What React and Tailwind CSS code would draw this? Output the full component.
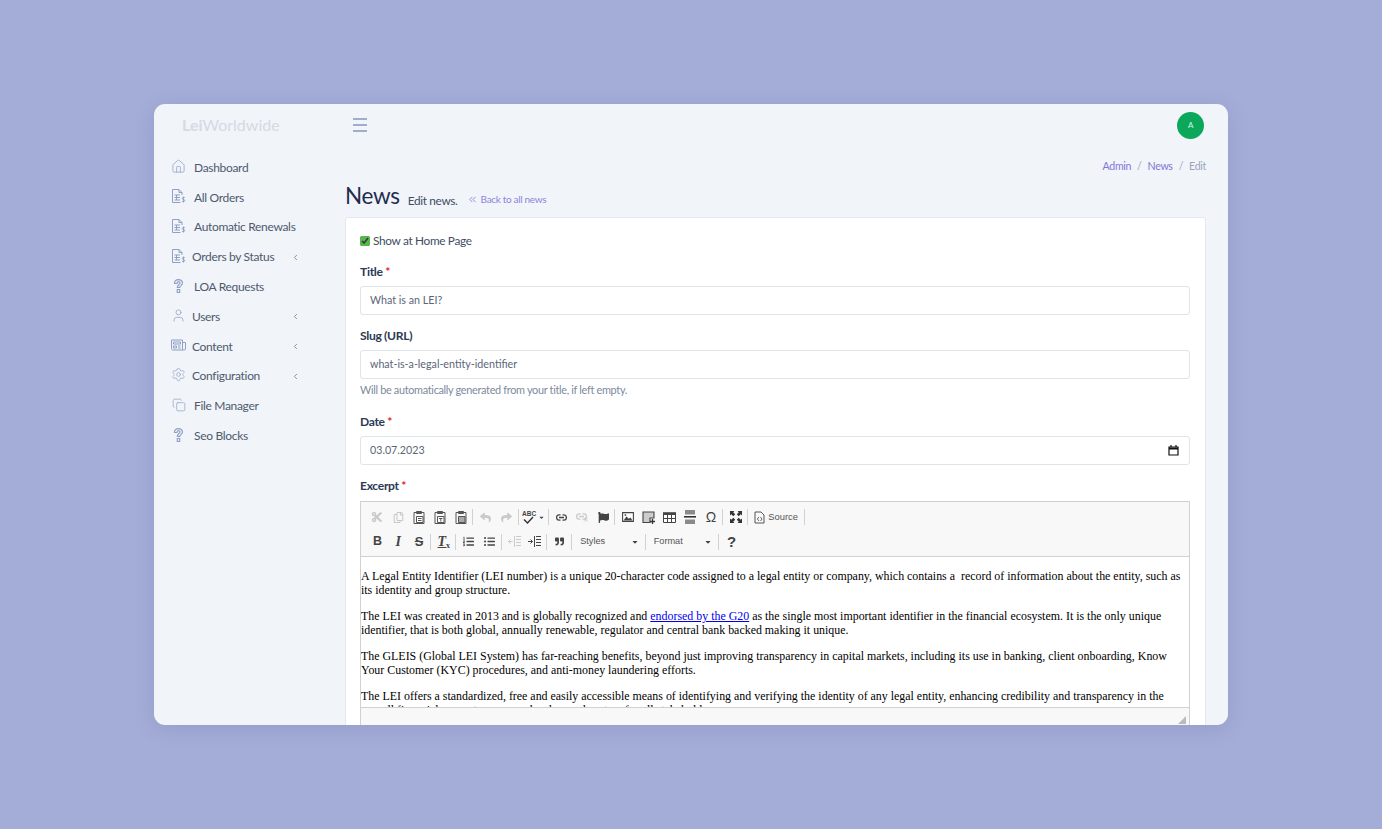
import { ChevronLeft, ChevronsLeft, Copy, Home, Settings, User } from "lucide-react";
import { FaCut, FaFlag, FaListOl, FaListUl, FaQuoteRight, FaReply, FaRegCopy, FaShare, FaCaretDown } from "react-icons/fa";

const font = "font-['Lato','Noto_Sans',sans-serif] tracking-[-0.02em]";

function OrderIcon() {
  return (
    <svg width="15" height="16" viewBox="0 0 15 16" fill="none" stroke="currentColor" strokeWidth="1">
      <path d="M9.5 14.5H1.5V1.5H8L11 4.5V7" />
      <path d="M8 1.5V4.5H11" />
      <path d="M3.5 7H9M3.5 9.5H9M3.5 12H9M5.5 7V12" />
      <path d="M13.8 9.5H12C11 9.5 11 11.5 12.2 11.5H12.8C14 11.5 14 13.5 12.8 13.5H11M12.5 8.5V14.5" strokeWidth="0.9" />
    </svg>
  );
}

function HelpIcon() {
  return (
    <svg width="15" height="16" viewBox="0 0 15 16" fill="none" stroke="currentColor" strokeWidth="1.2">
      <path d="M3.5 5.5C3.5 0.5 11.5 0.5 11.5 5C11.5 7.5 8.7 7.6 8.7 9.5H6.3C6.3 6.5 9 6.5 9 5C9 3.2 6 3.2 6 5.5Z" />
      <path d="M6.3 11.5H8.7V14.5H6.3Z" />
    </svg>
  );
}

function ContentIcon() {
  return (
    <svg width="15" height="16" viewBox="0 0 15 16" fill="none" stroke="currentColor" strokeWidth="1">
      <path d="M0.5 3H11.5V13H2C1 13 0.5 12.5 0.5 11.5Z" />
      <path d="M11.5 5.5H14.5V12C14.5 12.7 14 13 13 13H11.5" />
      <path d="M2.5 5H9.5V7H2.5ZM2.5 9H5.5V11H2.5ZM7 9H9.5M7 11H9.5" />
    </svg>
  );
}

const navItems = [
  { label: "Dashboard", icon: <Home size={15} strokeWidth={1.2} /> },
  { label: "All Orders", icon: <OrderIcon /> },
  { label: "Automatic Renewals", icon: <OrderIcon /> },
  { label: "Orders by Status", icon: <OrderIcon />, sub: true },
  { label: "LOA Requests", icon: <HelpIcon /> },
  { label: "Users", icon: <User size={15} strokeWidth={1.2} />, sub: true },
  { label: "Content", icon: <ContentIcon />, sub: true },
  { label: "Configuration", icon: <Settings size={15} strokeWidth={1.1} />, sub: true },
  { label: "File Manager", icon: <Copy size={14} strokeWidth={1.2} /> },
  { label: "Seo Blocks", icon: <HelpIcon /> },
];

function NavItem({ label, icon, sub }) {
  return (
    <a className="flex h-[29.8px] items-center pr-[45px] pl-[17px] text-[12px] text-[#4e5a6e]">
      <span className="-mt-[3px] flex w-[15px] shrink-0 justify-center text-[#8fa0c4]">{icon}</span>
      <span className={sub ? "ml-[6px] flex-1" : "ml-[8px] flex-1"}>{label}</span>
      {sub && <ChevronLeft size={9} strokeWidth={2.5} className="text-[#7f8ca8]" />}
    </a>
  );
}

function Field({ label, required, children, hint }) {
  return (
    <div className="mb-[10px]">
      <label className="mb-[4px] block pt-[1px] text-[12.1px] leading-[20px] font-bold text-[#2b3a55]">
        {label} {required && <span className="text-[#e02020]">*</span>}
      </label>
      {children}
      {hint && <p className="mt-[2px] mb-[12px] text-[10.9px] leading-[18px] text-[#7d8a9e]">{hint}</p>}
    </div>
  );
}

function TextBox({ value, children }) {
  return (
    <div className="flex h-[29px] items-center justify-between rounded-[3px] border border-[#dfe3ea] bg-white pr-[10px] pl-[9px] text-[10.7px] tracking-normal text-[#5a6577]">
      <span>{value}</span>
      {children}
    </div>
  );
}

function Btn({ children, off }) {
  return <span className={`flex h-[24px] w-[20.8px] shrink-0 items-center justify-center text-[#444] ${off ? "opacity-25" : ""}`}>{children}</span>;
}

function Sep() {
  return <span className="mr-[2px] ml-[1px] h-[16px] w-px shrink-0 bg-[#d1d1d1]" />;
}

function PasteIcon({ mark }) {
  return (
    <svg width="12" height="13" viewBox="0 0 12 13" fill="none" stroke="#555" strokeWidth="1">
      <path d="M3 1.5H1V12.5H11V1.5H9" />
      <path d="M3.5 0.5H8.5V2.5H3.5Z" fill="#555" />
      <path d="M3.5 5.5H10V11.5H3.5Z" fill={mark === "word" ? "#aaa" : "#fff"} />
      {mark === "text" && <path d="M5 7.5H8.5M6.8 7.5V10.5" />}
      {mark === "plain" && <path d="M5 7.5H8.5M5 9.5H8.5" />}
    </svg>
  );
}

function SpellIcon() {
  return (
    <svg width="15" height="14" viewBox="0 0 15 14" fill="none">
      <text x="0" y="6" fontSize="6.5" fontWeight="700" fill="#444" fontFamily="Liberation Sans">ABC</text>
      <path d="M2 9.5L5.5 13L11 7" stroke="#333" strokeWidth="1.4" />
    </svg>
  );
}

function LinkIcon() {
  return (
    <svg width="11" height="7" viewBox="0 0 11 7" fill="none" stroke="#444" strokeWidth="1.3">
      <path d="M4.5 0.8H3C-0.2 0.8 -0.2 6.2 3 6.2H4.5M6.5 0.8H8C11.2 0.8 11.2 6.2 8 6.2H6.5M3 3.5H8" />
    </svg>
  );
}

function UnlinkIcon() {
  return (
    <svg width="12" height="10" viewBox="0 0 12 10" fill="none" stroke="#444" strokeWidth="1.3">
      <path d="M4.5 1.8H3C-0.2 1.8 -0.2 7.2 3 7.2H4.5M6.5 1.8H8C11.2 1.8 11.2 7.2 8 7.2H6.5M3 4.5H8" />
      <path d="M8 6L11.5 9.5M11.5 6L8 9.5" strokeWidth="1" />
    </svg>
  );
}

function AddImageIcon() {
  return (
    <svg width="13" height="13" viewBox="0 0 13 13" fill="none">
      <path d="M1 1H12V7H8V11.5H1Z" fill="#ccc" stroke="#444" strokeWidth="1.1" />
      <path d="M10.5 8V13M8 10.5H13" stroke="#333" strokeWidth="1.3" />
    </svg>
  );
}

function ImageIcon() {
  return (
    <svg width="12" height="10" viewBox="0 0 12 10" fill="none">
      <path d="M0.6 0.6H11.4V9.4H0.6Z" fill="#fff" stroke="#444" strokeWidth="1.1" />
      <path d="M1.5 8.5L4.5 4.5L6.8 6.8L8.5 5.5L10.5 8.5Z" fill="#444" />
      <circle cx="3.4" cy="3" r="0.9" fill="#555" />
    </svg>
  );
}

function TableIcon() {
  return (
    <svg width="13" height="11" viewBox="0 0 13 11" fill="none" stroke="#444" strokeWidth="1">
      <path d="M0.5 2.5H12.5V10.5H0.5Z" fill="#fff" />
      <path d="M0 0.2H13V3H0Z" fill="#444" stroke="none" />
      <path d="M0.5 6.5H12.5M4.5 3V10.5M8.5 3V10.5" />
    </svg>
  );
}

function RuleIcon() {
  return (
    <svg width="12" height="14" viewBox="0 0 12 14">
      <path d="M1 0H11V4.5H1Z" fill="#8a8a8a" />
      <path d="M0 6H12V7.6H0Z" fill="#333" />
      <path d="M1 9.5H11V14H1Z" fill="#8a8a8a" />
    </svg>
  );
}

function FitIcon() {
  return (
    <svg width="12" height="12" viewBox="0 0 12 12" fill="#333">
      <path d="M0 0H4.5L3.2 1.3L5.2 3.3L3.3 5.2L1.3 3.2L0 4.5ZM12 0V4.5L10.7 3.2L8.7 5.2L6.8 3.3L8.8 1.3L7.5 0ZM0 12V7.5L1.3 8.8L3.3 6.8L5.2 8.7L3.2 10.7L4.5 12ZM12 12H7.5L8.8 10.7L6.8 8.7L8.7 6.8L10.7 8.8L12 7.5Z" />
    </svg>
  );
}

function SourceIcon() {
  return (
    <svg width="11" height="13" viewBox="0 0 11 13" fill="none" stroke="#555" strokeWidth="1">
      <path d="M1 1H7L10 4V12H1Z" />
      <path d="M5 6L3.3 8L5 10M6.5 6L8 8L6.5 10" strokeWidth="0.9" />
    </svg>
  );
}

function IndentIcon({ out }) {
  return (
    <svg width="13" height="11" viewBox="0 0 13 11" fill="none" stroke="#444" strokeWidth="1">
      <path d="M8 0.5H13M8 3.5H13M8 6.5H13M8 9.5H13M6.5 0V11" />
      {out ? <path d="M4.5 5.5H0.5M2.5 3.5L0.5 5.5L2.5 7.5" /> : <path d="M0 5.5H4.5M2.5 3.5L4.5 5.5L2.5 7.5" />}
    </svg>
  );
}

function Combo({ label }) {
  return (
    <span className="flex h-[24px] w-[69.5px] shrink-0 items-center justify-between pr-[5px] pl-[6px] text-[9.2px] text-[#555]">
      {label}
      <FaCaretDown size={8} className="text-[#444]" />
    </span>
  );
}

function Toolbar() {
  return (
    <div className="h-[55px] border-b border-[#d1d1d1] bg-[#f8f8f8] pt-[3px] pl-[6px] font-['Liberation_Sans',sans-serif] tracking-normal">
      <div className="flex h-[24.5px] items-center">
        <Btn off><FaCut size={12} /></Btn>
        <Btn off><FaRegCopy size={11} /></Btn>
        <Btn><PasteIcon mark="plain" /></Btn>
        <Btn><PasteIcon mark="text" /></Btn>
        <Btn><PasteIcon mark="word" /></Btn>
        <Sep />
        <Btn off><FaReply size={11} /></Btn>
        <Btn off><FaShare size={11} /></Btn>
        <Sep />
        <span className="flex w-[26.5px] shrink-0 items-center justify-center gap-[1px]"><SpellIcon /><FaCaretDown size={7} className="text-[#444]" /></span>
        <Sep />
        <Btn><LinkIcon /></Btn>
        <Btn off><UnlinkIcon /></Btn>
        <Btn><FaFlag size={11} /></Btn>
        <Sep />
        <Btn><ImageIcon /></Btn>
        <Btn><AddImageIcon /></Btn>
        <Btn><TableIcon /></Btn>
        <Btn><RuleIcon /></Btn>
        <Btn><span className="text-[14px] leading-none">Ω</span></Btn>
        <Sep />
        <Btn><FitIcon /></Btn>
        <Sep />
        <span className="flex shrink-0 items-center gap-[3px] pr-[5px] pl-[4px] text-[9.4px] text-[#555]"><SourceIcon />Source</span>
        <Sep />
      </div>
      <div className="flex h-[24.5px] items-center">
        <Btn><b className="text-[12.5px]">B</b></Btn>
        <Btn><i className="font-['Liberation_Serif',serif] text-[14px] font-bold">I</i></Btn>
        <Btn><span className="text-[13px] font-bold line-through">S</span></Btn>
        <Sep />
        <Btn><span className="font-['Liberation_Serif',serif] text-[14px] font-bold italic underline">T<sub className="text-[8px] not-italic no-underline">x</sub></span></Btn>
        <Sep />
        <Btn><FaListOl size={11} /></Btn>
        <Btn><FaListUl size={11} /></Btn>
        <Sep />
        <Btn off><IndentIcon out /></Btn>
        <Btn><IndentIcon /></Btn>
        <Sep />
        <Btn><FaQuoteRight size={9} /></Btn>
        <Sep />
        <Combo label="Styles" />
        <Sep />
        <Combo label="Format" />
        <Sep />
        <Btn><b className="text-[15px] leading-none">?</b></Btn>
      </div>
    </div>
  );
}

function Editor() {
  return (
    <div className="border border-[#d1d1d1]">
      <Toolbar />
      <div className="h-[150px] overflow-hidden bg-white pt-[12px] font-['Liberation_Serif',serif] text-[11.92px] leading-[14px] tracking-normal text-black">
        <p className="mb-[12px]">A Legal Entity Identifier (LEI number) is a unique 20-character code assigned to a legal entity or company, which contains a&nbsp; record of information about the entity, such as its identity and group structure.</p>
        <p className="mb-[12px]">The LEI was created in 2013 and is globally recognized and <a className="text-[#0000ee] underline">endorsed by the G20</a> as the single most important identifier in the financial ecosystem. It is the only unique identifier, that is both global, annually renewable, regulator and central bank backed making it unique.</p>
        <p className="mb-[12px]">The GLEIS (Global LEI System) has far-reaching benefits, beyond just improving transparency in capital markets, including its use in banking, client onboarding, Know Your Customer (KYC) procedures, and anti-money laundering efforts.</p>
        <p>The LEI offers a standardized, free and easily accessible means of identifying and verifying the identity of any legal entity, enhancing credibility and transparency in the overall financial ecosystem, across borders and sectors for all stakeholders.</p>
      </div>
      <div className="flex h-[30px] justify-end border-t border-[#d1d1d1] bg-[#f8f8f8] pt-[8px] pr-[3px]">
        <svg width="8" height="8" viewBox="0 0 8 8"><path d="M8 0V8H0Z" fill="#bbb" /></svg>
      </div>
    </div>
  );
}

export default function App() {
  return (
    <div className={`flex h-[829px] items-start justify-center bg-[#a4add8] pt-[104px] ${font}`}>
      <div className="flex h-[621px] w-[1074px] flex-col overflow-hidden rounded-[11px] bg-[#f1f4f9] shadow-[0_4px_20px_rgba(60,70,120,0.15)]">
        <header className="flex h-[42px] shrink-0 items-center pr-[24px]">
          <div className="w-[199px] pl-[28px] text-[16px] tracking-normal text-[#d5dae4]">
            <span className="font-bold">Lei</span>Worldwide
          </div>
          <svg width="14" height="14" viewBox="0 0 14 14" stroke="#8496bd" strokeWidth="1.4"><path d="M0 1H14M0 7H14M0 13H14" /></svg>
          <div className="ml-auto flex h-[27px] w-[27px] items-center justify-center rounded-full bg-[#0ba75a] text-[8px] text-[#d8f3e4]">A</div>
        </header>

        <div className="flex min-h-0 flex-1">
          <aside className="w-[191px] shrink-0 pt-[7px]">
            <nav>
              {navItems.map((item) => <NavItem key={item.label} {...item} />)}
            </nav>
          </aside>

          <main className="min-w-0 flex-1 overflow-hidden pr-[22px]">
            <div className="flex h-[28px] items-center justify-end gap-[6px] pt-[13px] text-[10.6px] text-[#7f78d8]">
              <a>Admin</a><span className="text-[#a0a8bd]">/</span><a>News</a><span className="text-[#a0a8bd]">/</span><span className="text-[#9aa5bb]">Edit</span>
            </div>
            <div className="flex h-[43px] items-baseline pt-[6px]">
              <h1 className="text-[22.5px] leading-[32px] text-[#1f2c4d]">News</h1>
              <span className="ml-[8px] translate-y-px text-[11.8px] text-[#414d63]">Edit news.</span>
              <a className="ml-[9px] flex translate-y-px items-center gap-[3px] text-[10px] text-[#8c85de]"><ChevronsLeft size={11} />Back to all news</a>
            </div>

            <section className="rounded-t-[3px] border border-[#e3e7ee] bg-white pt-[13px] pr-[15px] pl-[14px]">
              <label className="mb-[10px] flex h-[20px] items-center text-[11.8px] text-[#414d63]">
                <input type="checkbox" defaultChecked readOnly className="mr-[3px] ml-0 h-[10px] w-[10px] accent-[#55b84a]" />
                Show at Home Page
              </label>
              <Field label="Title" required><TextBox value="What is an LEI?" /></Field>
              <Field label="Slug (URL)" hint="Will be automatically generated from your title, if left empty."><TextBox value="what-is-a-legal-entity-identifier" /></Field>
              <Field label="Date" required>
                <TextBox value="03.07.2023">
                  <svg width="11" height="11" viewBox="0 0 11 11" fill="none" stroke="#111" strokeWidth="1.2">
                    <path d="M1 2H10V10H1Z" /><path d="M1 3.5H10" strokeWidth="2" /><path d="M3 0V2M8 0V2" />
                  </svg>
                </TextBox>
              </Field>
              <div>
                <label className="mb-[5px] block pt-[1px] text-[12.1px] leading-[20px] font-bold text-[#2b3a55]">Excerpt <span className="text-[#e02020]">*</span></label>
                <Editor />
              </div>
            </section>
          </main>
        </div>
      </div>
    </div>
  );
}
